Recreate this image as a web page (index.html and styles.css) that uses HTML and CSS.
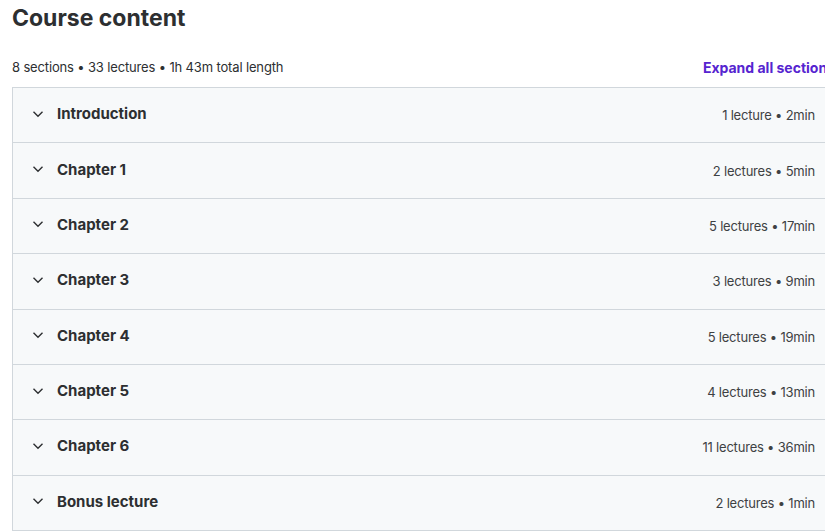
FILE: index.html
```html
<!DOCTYPE html>
<html lang="en">
<head>
  <meta charset="UTF-8" />
  <meta name="viewport" content="width=device-width, initial-scale=1.0"/>
  <title>Course content</title>
  <link rel="stylesheet" href="styles.css">
</head>
<body>
  <div class="course">
    <h2 class="title">Course content</h2>

    <div class="meta">
      <span>8 sections • 33 lectures • 1h 43m total length</span>
      <a class="expand" href="#">Expand all sections</a>
    </div>

    <div class="sections">
      <div class="section">
        <svg class="chev" viewBox="0 0 12 8"><path d="M1.5 1.8L6 6.2l4.5-4.4" /></svg>
        <span class="name">Introduction</span>
        <span class="info">1 lecture • 2min</span>
      </div>
      <div class="section">
        <svg class="chev" viewBox="0 0 12 8"><path d="M1.5 1.8L6 6.2l4.5-4.4" /></svg>
        <span class="name">Chapter 1</span>
        <span class="info">2 lectures • 5min</span>
      </div>
      <div class="section">
        <svg class="chev" viewBox="0 0 12 8"><path d="M1.5 1.8L6 6.2l4.5-4.4" /></svg>
        <span class="name">Chapter 2</span>
        <span class="info">5 lectures • 17min</span>
      </div>
      <div class="section">
        <svg class="chev" viewBox="0 0 12 8"><path d="M1.5 1.8L6 6.2l4.5-4.4" /></svg>
        <span class="name">Chapter 3</span>
        <span class="info">3 lectures • 9min</span>
      </div>
      <div class="section">
        <svg class="chev" viewBox="0 0 12 8"><path d="M1.5 1.8L6 6.2l4.5-4.4" /></svg>
        <span class="name">Chapter 4</span>
        <span class="info">5 lectures • 19min</span>
      </div>
      <div class="section">
        <svg class="chev" viewBox="0 0 12 8"><path d="M1.5 1.8L6 6.2l4.5-4.4" /></svg>
        <span class="name">Chapter 5</span>
        <span class="info">4 lectures • 13min</span>
      </div>
      <div class="section">
        <svg class="chev" viewBox="0 0 12 8"><path d="M1.5 1.8L6 6.2l4.5-4.4" /></svg>
        <span class="name">Chapter 6</span>
        <span class="info">11 lectures • 36min</span>
      </div>
      <div class="section">
        <svg class="chev" viewBox="0 0 12 8"><path d="M1.5 1.8L6 6.2l4.5-4.4" /></svg>
        <span class="name">Bonus lecture</span>
        <span class="info">2 lectures • 1min</span>
      </div>
    </div>
  </div>
</body>
</html>
```

FILE: styles.css
```css
body { margin: 0; font-family: Inter, "Noto Sans", sans-serif; color: #2d2f31; overflow: hidden; }
.course { width: 828px; margin-left: 12px; }
.title { margin: 0; padding-top: 4px; font-size: 23px; font-weight: 700; line-height: 28px; }
.meta { display: flex; justify-content: space-between; align-items: center; margin-top: 25px; height: 20px; font-size: 13px; letter-spacing: -0.15px; }
.expand { color: #5624d0; font-size: 14px; font-weight: 700; text-decoration: none; letter-spacing: 0; white-space: nowrap; margin-right: 5px; }
.sections { margin-top: 10px; border: 1px solid #d1d7dc; border-bottom: none; }
.section { display: flex; align-items: center; height: 54.375px; padding: 0 24px 0 19px; background: #f7f9fa; border-bottom: 1px solid #d1d7dc; }
.chev { width: 12px; height: 8px; fill: none; stroke: #2d2f31; stroke-width: 1.4; margin: 0 13px 3px 0; }
.name { font-size: 15px; font-weight: 700; margin-bottom: 3px; }
.info { margin-left: auto; font-size: 13px; color: #3e4143; letter-spacing: -0.2px; }
```
